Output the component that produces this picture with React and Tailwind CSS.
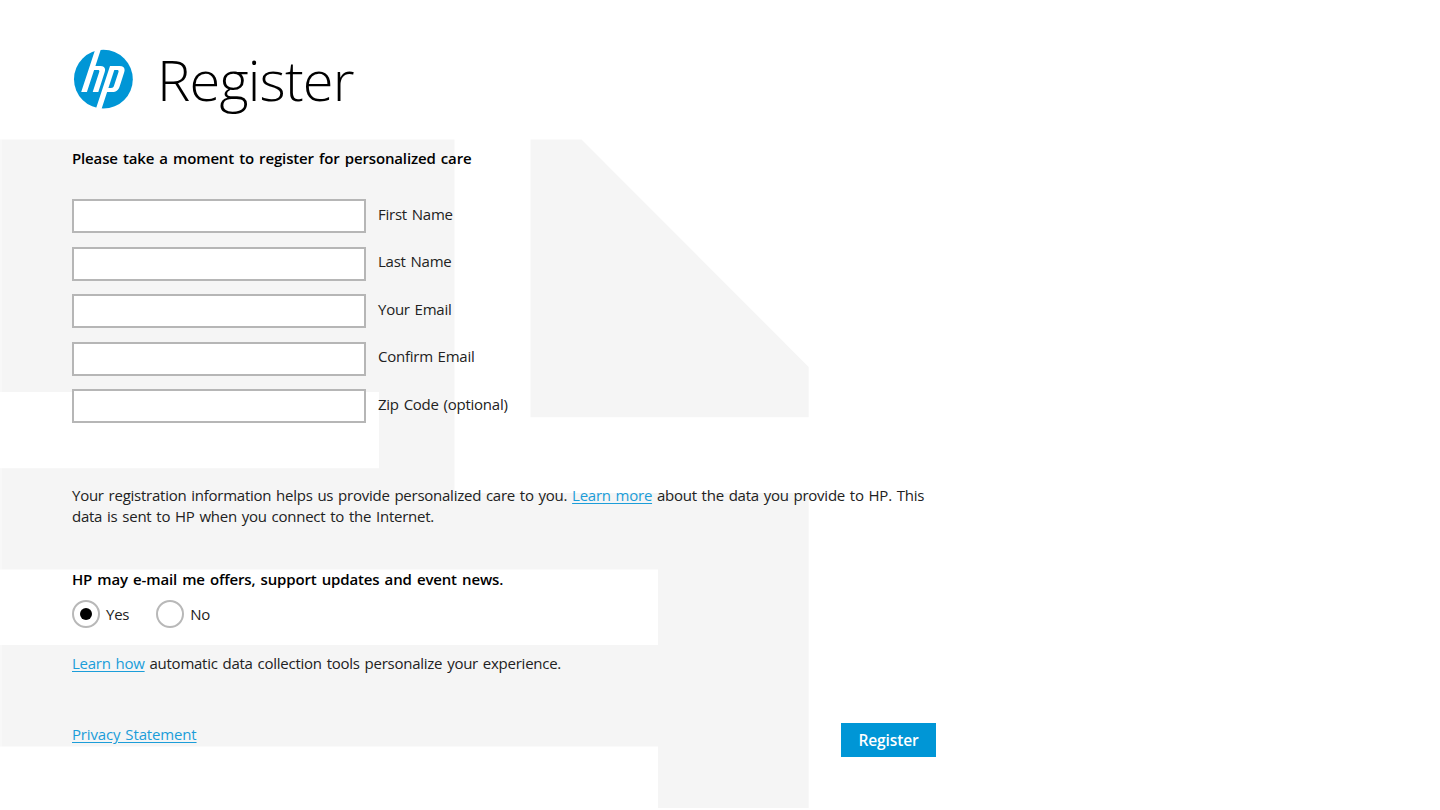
import { useState } from 'react';

const fields = [
  { name: 'firstName', label: 'First Name' },
  { name: 'lastName', label: 'Last Name' },
  { name: 'email', label: 'Your Email' },
  { name: 'confirmEmail', label: 'Confirm Email' },
  { name: 'zipCode', label: 'Zip Code (optional)' },
];

const HpLogo = () => (
  <svg width="60" height="60" viewBox="0 0 60 60" aria-label="HP">
    <circle cx="30.4" cy="30.2" r="29.4" fill="#0096d6" />
    <g fill="#fff">
      <path d="M22.7 -1H28.3L22.4 17H27.4C31.4 17 32.9 19.3 31.7 23L25.3 43H19.7L26.2 23.1C26.6 21.7 26.2 21 25 21H21.1L13.9 43H8.2Z" />
      <path d="M37 17H46.6C50.9 17 52.4 19.5 51.2 23.3L46.8 37C45.5 41.2 43.3 43 39.2 43H34.1L28.2 61H22.5ZM41.3 21L35.4 39H38C39.7 39 40.5 38.4 41 36.8L45.4 23.3C45.9 21.7 45.4 21 44 21Z" />
    </g>
  </svg>
);

const Backdrop = () => (
  <svg className="absolute inset-0 -z-10" width="1440" height="810" viewBox="0 0 1440 810" fill="#f5f5f5">
    <path d="M2 139.5H454.5V493H808.7V808H658V746.5H2V645H658V569.5H2V468.3H379V392H2Z" />
    <path d="M530.5 139.5H581.5L808.7 367V417.3H530.5Z" />
    <path fill="#f8f8f8" d="M0 139.5H2V392H0ZM0 468.3H2V569.5H0ZM0 645H2V746.5H0Z" />
  </svg>
);

const Link = ({ children }) => (
  <a href="#" className="text-[#1b9dd9] underline underline-offset-2">
    {children}
  </a>
);

const Heading = ({ children }) => (
  <h2 className="font-semibold tracking-[-0.15px] text-black [word-spacing:1.4px]">{children}</h2>
);

const Radio = ({ label, checked, onChange }) => (
  <label className="flex items-center gap-[6px]">
    <input type="radio" name="offers" className="sr-only" checked={checked} onChange={onChange} />
    <span className="flex size-7 items-center justify-center rounded-full border-2 border-[#b8b8b8] bg-white">
      {checked && <span className="size-3 rounded-full bg-black" />}
    </span>
    {label}
  </label>
);

const App = () => {
  const [offers, setOffers] = useState('yes');

  return (
    <div className="relative isolate h-[810px] w-[1440px] overflow-hidden bg-white font-['Open_Sans',sans-serif] text-[15px] leading-[21px] tracking-[-0.25px] text-[#222] [word-spacing:1.2px]">
      <Backdrop />
      <header className="flex h-[139px] items-start pt-[49px] pl-[73px]">
        <HpLogo />
        <h1 className="ml-6 text-[56px] leading-[60px] font-light tracking-[-0.8px] text-black">Register</h1>
      </header>

      <main className="flex w-[936px] flex-col pt-[9px] pl-[72px]">
        <Heading>Please take a moment to register for personalized care</Heading>

        <form className="mt-[30px] flex flex-col gap-[13.5px]">
          {fields.map((field) => (
            <label key={field.name} className="flex h-[34px] items-center gap-3">
              <input name={field.name} className="h-[34px] w-[294px] border-2 border-[#b6b6b6] bg-white px-2 outline-none" />
              <span className="pb-1">{field.label}</span>
            </label>
          ))}
        </form>

        <p className="mt-[62px] whitespace-nowrap">
          Your registration information helps us provide personalized care to you. <Link>Learn more</Link> about the data you provide to HP. This
          <br />
          data is sent to HP when you connect to the Internet.
        </p>

        <div className="mt-[42px]">
          <Heading>HP may e-mail me offers, support updates and event news.</Heading>
        </div>
        <div className="mt-[10px] flex gap-[27px]">
          <Radio label="Yes" checked={offers === 'yes'} onChange={() => setOffers('yes')} />
          <Radio label="No" checked={offers === 'no'} onChange={() => setOffers('no')} />
        </div>

        <p className="mt-[25px]">
          <Link>Learn how</Link> automatic data collection tools personalize your experience.
        </p>

        <div className="mt-[49px] flex items-start justify-between">
          <div className="pt-px tracking-[-0.15px]">
            <Link>Privacy Statement</Link>
          </div>
          <button type="button" className="h-[34px] w-[95px] bg-[#0096d6] text-[15.5px] font-semibold tracking-[-0.1px] text-white">
            Register
          </button>
        </div>
      </main>
    </div>
  );
};

export default App;
